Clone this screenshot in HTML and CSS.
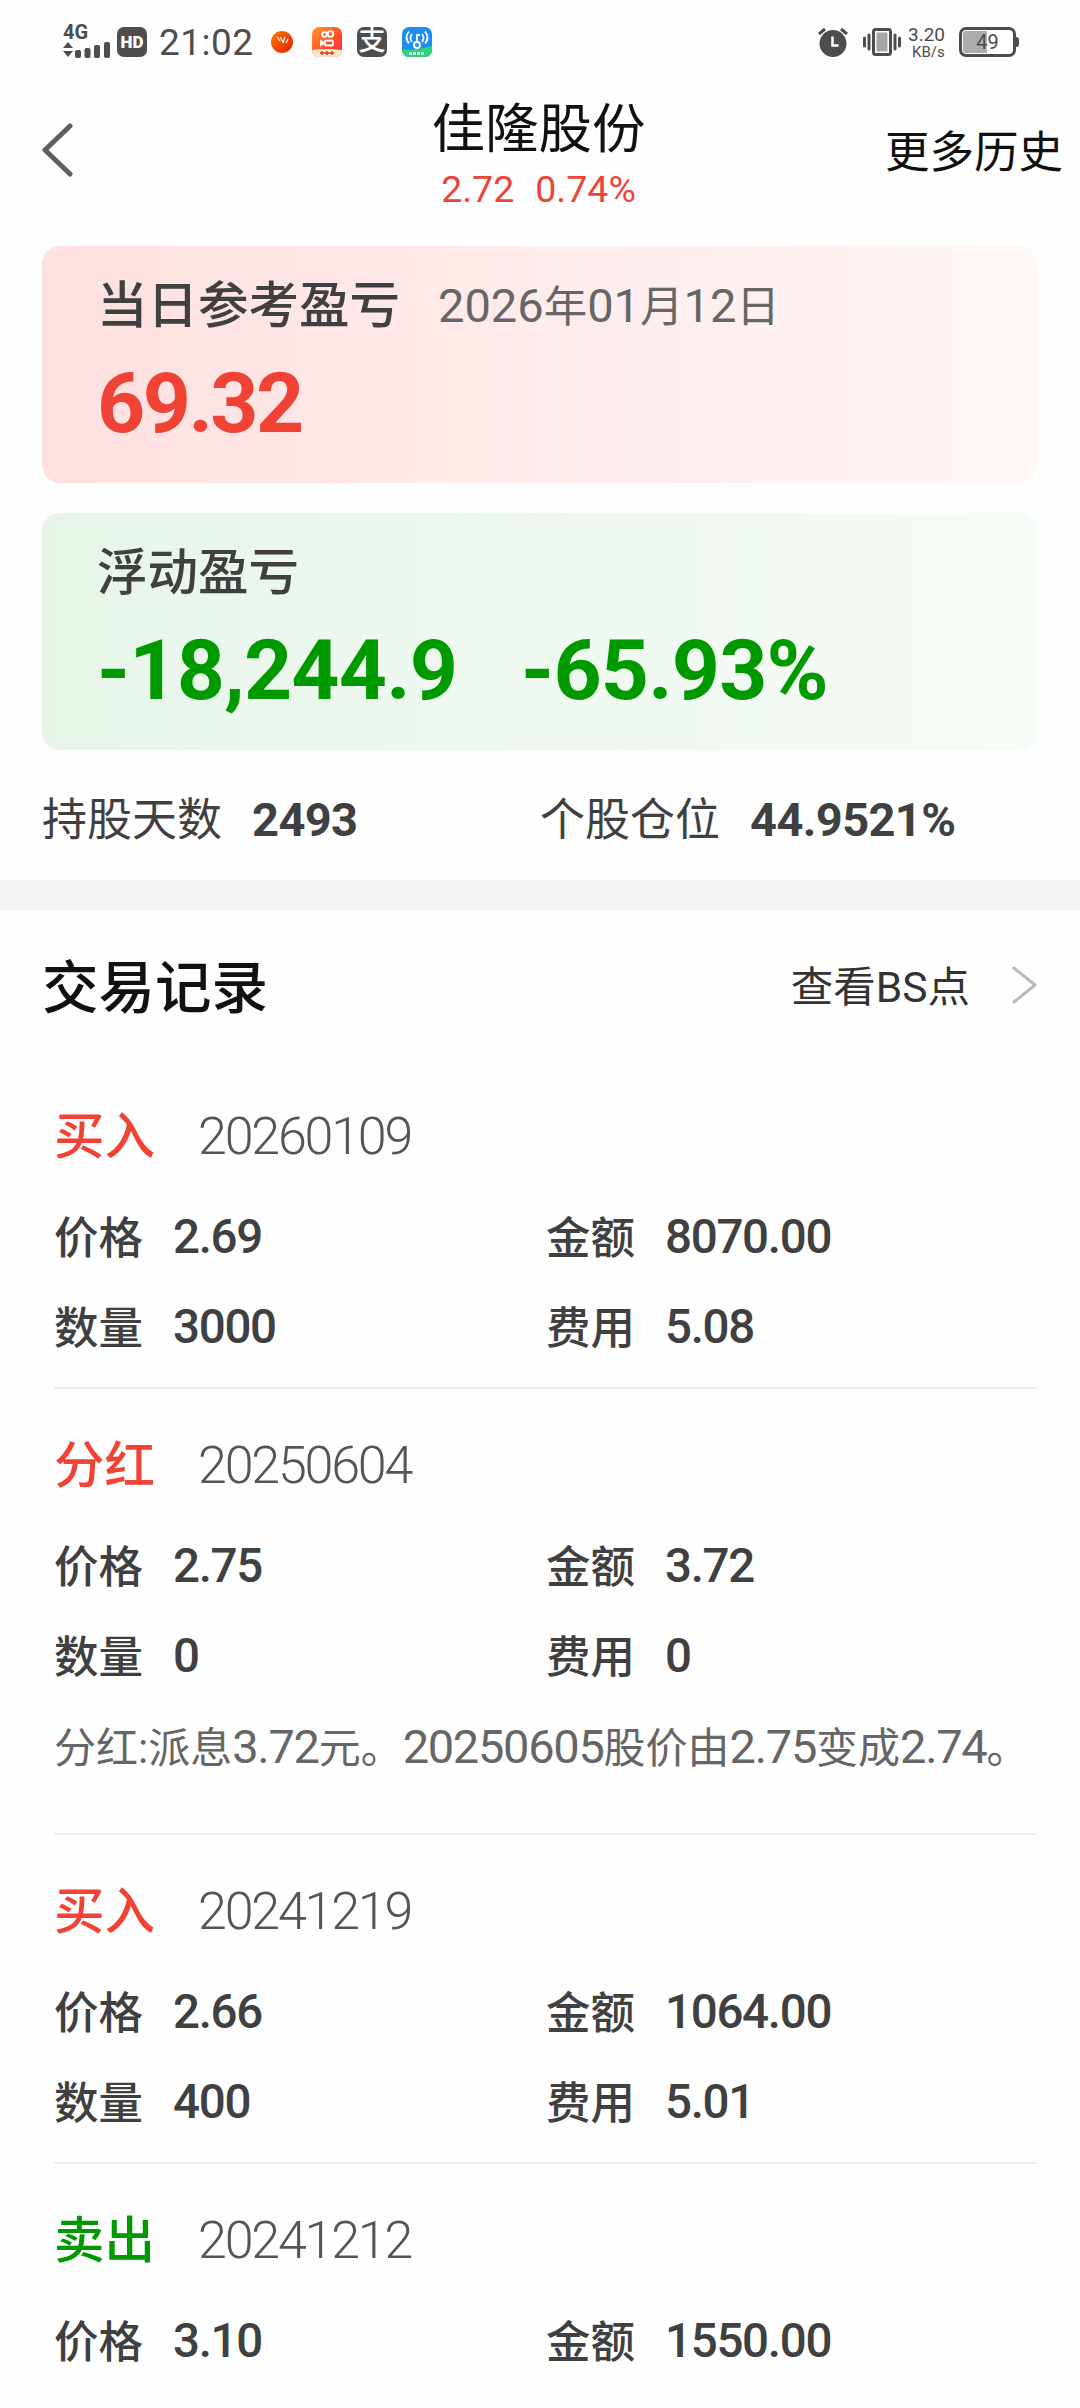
FILE: index.html
```html
<!DOCTYPE html>
<html lang="zh-CN">
<head>
    <meta charset="UTF-8">
    <meta name="viewport" content="width=device-width, initial-scale=1.0">
    <title>佳隆股份</title>
    <link rel="stylesheet" href="styles.css">
</head>
<body>

<div class="status-bar">
    <div class="signal">
        <span class="network">4G</span>
        <svg width="48" height="19" viewBox="0 0 48 19" fill="#4d4d4d">
            <path d="M0 8L5 2l5 6zM0 11h10l-5 6z"/>
            <rect x="12" y="10" width="6" height="8" rx="2"/>
            <rect x="21.500" y="8" width="6" height="10" rx="2"/>
            <rect x="31" y="5" width="6" height="13" rx="2"/>
            <rect x="41" y="2" width="6" height="16" rx="2"/>
        </svg>
    </div>
    <div class="hd">HD</div>
    <div class="clock">21:02</div>
    <div class="apps">
        <svg width="22" height="22" viewBox="0 0 22 22">
            <defs>
                <linearGradient id="ball" x1="0" y1="0" x2="1" y2="1">
                    <stop offset="0" stop-color="#ff7a00"/>
                    <stop offset="1" stop-color="#e02000"/>
                </linearGradient>
            </defs>
            <circle cx="11" cy="11" r="11" fill="url(#ball)"/>
            <path d="M6 6l3 4M9 6l3 5M12 12l2-6M15 12l2-4" stroke="#fff" stroke-width="1.200" fill="none"/>
        </svg>
        <svg width="30" height="30" viewBox="0 0 30 30">
            <defs>
                <linearGradient id="cam" x1="0" y1="0" x2="1" y2="1">
                    <stop offset="0" stop-color="#ff9a2e"/>
                    <stop offset=".6" stop-color="#ff4a2a"/>
                    <stop offset="1" stop-color="#ff2a4a"/>
                </linearGradient>
            </defs>
            <rect width="30" height="30" rx="7" fill="url(#cam)"/>
            <path d="M0 23q15-2 30 0a7 7 0 0 1-7 7H7a7 7 0 0 1-7-7z" fill="#ffe9c9"/>
            <g fill="none" stroke="#fff" stroke-width="1.800">
                <circle cx="12.500" cy="7.500" r="2.300"/>
                <circle cx="18.500" cy="7" r="2.800"/>
                <rect x="13" y="13.500" width="8" height="5" rx="1"/>
                <path d="M12 16l-3-2v4z"/>
            </g>
            <path d="M8 26h14M10 24v4M15 24v4M20 24v4" stroke="#e8322a" stroke-width="1.500"/>
        </svg>
        <div class="pay">支</div>
        <svg width="30" height="30" viewBox="0 0 30 30">
            <rect width="30" height="30" rx="7" fill="#1e8df0"/>
            <path d="M0 23q15 0 30-4v4a7 7 0 0 1-7 7H7a7 7 0 0 1-7-7z" fill="#2fd27c"/>
            <g fill="none" stroke="#fff" stroke-width="1.800">
                <circle cx="15" cy="18" r="3"/>
                <path d="M15 15V7M15 8h3M10 7q-3 4 0 8M7 4.500q-5 6 0 12M20 7q3 4 0 8M23 4.500q5 6 0 12"/>
            </g>
            <path d="M7 26.500h16" stroke="#fff" stroke-width="2.500" stroke-dasharray="3 1"/>
        </svg>
    </div>
    <div class="status-right">
        <svg width="30" height="30" viewBox="0 0 30 30">
            <circle cx="15" cy="16.500" r="13.500" fill="#4d4d4d"/>
            <path d="M1 7l6-5M29 7l-6-5" stroke="#4d4d4d" stroke-width="3"/>
            <path d="M14.500 9.500v9h6" stroke="#fff" stroke-width="2.500" fill="none"/>
        </svg>
        <svg width="38" height="30" viewBox="0 0 38 30">
            <rect x="10.500" y="2.500" width="17" height="25" rx="2" fill="#fff" stroke="#4d4d4d" stroke-width="3"/>
            <rect x="13.500" y="5.500" width="11" height="19" fill="#a6a6a6"/>
            <path d="M1.500 11v8M6 8v14M32 8v14M36.500 11v8" stroke="#4d4d4d" stroke-width="3" stroke-linecap="round"/>
        </svg>
        <div class="speed">
            <span class="speed-value">3.20</span>
            <span class="speed-unit">KB/s</span>
        </div>
        <div class="battery">49</div>
    </div>
</div>

<div class="header">
    <svg class="back" width="32" height="54" viewBox="0 0 32 54">
        <path d="M29 3L4 27l25 24" fill="none" stroke="#5f5f5f" stroke-width="5" stroke-linecap="round" stroke-linejoin="round"/>
    </svg>
    <div class="stock">
        <div class="stock-name">佳隆股份</div>
        <div class="stock-price"><span>2.72</span><span>0.74%</span></div>
    </div>
    <div class="more">更多历史</div>
</div>

<div class="card card-red">
    <div class="card-title">
        <span class="card-label">当日参考盈亏</span>
        <span class="card-date"><b>2026</b>年<b>01</b>月<b>12</b>日</span>
    </div>
    <div class="card-value"><span class="amount">69.32</span></div>
</div>

<div class="card card-green">
    <div class="card-title">
        <span class="card-label">浮动盈亏</span>
    </div>
    <div class="card-value"><span>-18,244.9</span><span>-65.93%</span></div>
</div>

<div class="summary">
    <div class="summary-item"><span>持股天数</span><b>2493</b></div>
    <div class="summary-item"><span>个股仓位</span><b>44.9521%</b></div>
</div>

<div class="divider"></div>

<div class="section-head">
    <h2>交易记录</h2>
    <div class="link">
        <span>查看BS点</span>
        <svg width="26" height="38" viewBox="0 0 26 38">
            <path d="M2 2l21 17L2 36" fill="none" stroke="#b9b9b9" stroke-width="3" stroke-linecap="round" stroke-linejoin="round"/>
        </svg>
    </div>
</div>

<div class="records">
    <div class="record">
        <div class="record-head"><span class="type buy">买入</span><span class="date">20260109</span></div>
        <div class="record-grid">
            <div class="field"><span>价格</span><b>2.69</b></div>
            <div class="field"><span>金额</span><b>8070.00</b></div>
            <div class="field"><span>数量</span><b>3000</b></div>
            <div class="field"><span>费用</span><b>5.08</b></div>
        </div>
    </div>

    <div class="record has-note">
        <div class="record-head"><span class="type buy">分红</span><span class="date">20250604</span></div>
        <div class="record-grid">
            <div class="field"><span>价格</span><b>2.75</b></div>
            <div class="field"><span>金额</span><b>3.72</b></div>
            <div class="field"><span>数量</span><b>0</b></div>
            <div class="field"><span>费用</span><b>0</b></div>
        </div>
        <div class="note">分红:派息<b>3.72</b>元。<b>20250605</b>股价由<b>2.75</b>变成<b>2.74</b>。</div>
    </div>

    <div class="record">
        <div class="record-head"><span class="type buy">买入</span><span class="date">20241219</span></div>
        <div class="record-grid">
            <div class="field"><span>价格</span><b>2.66</b></div>
            <div class="field"><span>金额</span><b>1064.00</b></div>
            <div class="field"><span>数量</span><b>400</b></div>
            <div class="field"><span>费用</span><b>5.01</b></div>
        </div>
    </div>

    <div class="record">
        <div class="record-head"><span class="type sell">卖出</span><span class="date">20241212</span></div>
        <div class="record-grid">
            <div class="field"><span>价格</span><b>3.10</b></div>
            <div class="field"><span>金额</span><b>1550.00</b></div>
        </div>
    </div>
</div>

</body>
</html>
```
FILE: styles.css
```css
* {
    box-sizing: border-box;
}
body {
    margin: 0;
    width: 1080px;
    height: 2408px;
    overflow: hidden;
    background-color: #fefefe;
    font-family: Roboto, "Noto Sans CJK SC", sans-serif;
    line-height: 1;
    color: #404040;
    white-space: nowrap;
}
svg {
    display: block;
    flex: none;
}

/* Status bar */
.status-bar {
    display: flex;
    align-items: center;
    height: 84px;
    padding: 0 64px 0 63px;
    color: #4d4d4d;
}
.signal {
    width: 54px;
}
.network {
    display: block;
    font-size: 20px;
    font-weight: 700;
    line-height: 15px;
}
.hd {
    width: 30px;
    height: 30px;
    border-radius: 7px;
    background-color: #4d4d4d;
    color: #fff;
    font-size: 17px;
    font-weight: 900;
    line-height: 31px;
    text-align: center;
}
.clock {
    width: 112px;
    margin-left: 12px;
    font-size: 37px;
    letter-spacing: 0.5px;
}
.apps {
    display: flex;
    align-items: center;
    gap: 15px;
}
.apps svg:first-child {
    margin-right: 4px;
}
.pay {
    width: 30px;
    height: 30px;
    border-radius: 7px;
    background-color: #4d4d4d;
    color: #fff;
    font-size: 27px;
    font-weight: 500;
    line-height: 29px;
    text-align: center;
}
.status-right {
    display: flex;
    align-items: center;
    margin-left: auto;
}
.status-right svg {
    margin-right: 15px;
}
.status-right svg + svg {
    margin-right: 7px;
}
.speed {
    display: flex;
    flex-direction: column;
    width: 51px;
}
.speed-value {
    font-size: 19px;
    line-height: 19px;
}
.speed-unit {
    padding-left: 4px;
    font-size: 15px;
    line-height: 16px;
}
.battery {
    position: relative;
    width: 57px;
    height: 30px;
    border: 3px solid #4d4d4d;
    border-radius: 7px;
    background: linear-gradient(to right, #adadad 49%, #fff 49%);
    box-shadow: inset 0 0 0 1px #fff;
    font-size: 20px;
    line-height: 25px;
    text-align: center;
}
.battery::after {
    content: "";
    position: absolute;
    right: -6px;
    top: 7px;
    width: 3px;
    height: 10px;
    border-radius: 0 3px 3px 0;
    background-color: #4d4d4d;
}

/* Header */
.header {
    display: grid;
    grid-template-columns: 1fr auto 1fr;
    align-items: center;
    height: 132px;
    padding: 0 17px 0 41px;
    color: #111;
}
.stock {
    padding-top: 14px;
    margin-left: -27px;
    text-align: center;
}
.stock-name {
    font-size: 53.5px;
    line-height: 60px;
}
.stock-price {
    display: flex;
    justify-content: center;
    gap: 21px;
    margin-top: 4px;
    font-size: 37.5px;
    line-height: 50px;
    color: #ec4438;
}
.more {
    justify-self: end;
    padding-top: 7px;
    font-size: 44.5px;
}

/* Profit cards */
.card {
    height: 237px;
    margin: 30px 43px 0 42px;
    padding: 34px 55px 0;
    border-radius: 18px;
}
.card-red {
    background: linear-gradient(to right, #fee0e0, #fff7f6);
}
.card-green {
    background: linear-gradient(to right, #e7f5e9, #f6fcf6);
}
.card-title {
    display: flex;
    align-items: center;
    gap: 38px;
    height: 52px;
}
.card-label {
    font-size: 50.5px;
    font-weight: 500;
}
.card-date {
    font-size: 43.5px;
    color: #666;
}
.card-date b,
.note b {
    font-size: 47px;
    font-weight: 400;
}
.card-value {
    display: flex;
    gap: 64px;
    margin-top: 30px;
    font-size: 84px;
    font-weight: 700;
    letter-spacing: -0.8px;
}
.card-value .amount {
    letter-spacing: -2.5px;
}
.card-red .card-value {
    color: #f04336;
}
.card-green .card-value {
    color: #009a00;
}

/* Holding summary */
.summary {
    display: grid;
    grid-template-columns: 498px 1fr;
    height: 130px;
    padding: 8px 42px 0;
}
.summary-item {
    display: flex;
    align-items: center;
    gap: 30px;
    font-size: 45px;
}
.summary-item span,
.field span {
    padding-top: 3px;
}
.summary-item b {
    font-size: 47px;
    letter-spacing: -0.6px;
}
.divider {
    height: 30px;
    background-color: #f4f4f4;
}

/* Trade records */
.section-head {
    display: flex;
    align-items: center;
    justify-content: space-between;
    height: 150px;
    padding: 0 42px;
}
.section-head h2 {
    margin: 8px 0 0;
    font-size: 56.5px;
    font-weight: 500;
    color: #111;
}
.link {
    display: flex;
    align-items: center;
    gap: 42px;
    font-size: 42.5px;
    color: #333;
}
.link span {
    padding-top: 7px;
}
.records {
    padding: 0 43px 0 54px;
}
.record {
    height: 329px;
    padding-top: 41px;
    border-bottom: 2px solid #ededed;
}
.record.has-note {
    height: 446px;
}
.record:last-child {
    border-bottom: none;
}
.record-head {
    display: flex;
    align-items: center;
    gap: 43px;
    height: 72px;
}
.type {
    font-size: 50.5px;
    font-weight: 500;
}
.buy {
    color: #f04336;
}
.sell {
    color: #009a00;
}
.date {
    font-size: 52px;
    font-weight: 300;
    letter-spacing: -2.2px;
    color: #555;
}
.record-grid {
    display: grid;
    grid-template-columns: 492px 1fr;
    grid-auto-rows: 90px;
    margin-top: 20px;
}
.field {
    display: flex;
    align-items: center;
    gap: 30px;
    font-size: 44.5px;
}
.field span {
    font-weight: 500;
}
.field b {
    font-size: 47.5px;
    font-weight: 500;
    letter-spacing: -1.3px;
}
.note {
    font-size: 42px;
    line-height: 90px;
    color: #666;
}
.note b {
    letter-spacing: -1.3px;
}
```
